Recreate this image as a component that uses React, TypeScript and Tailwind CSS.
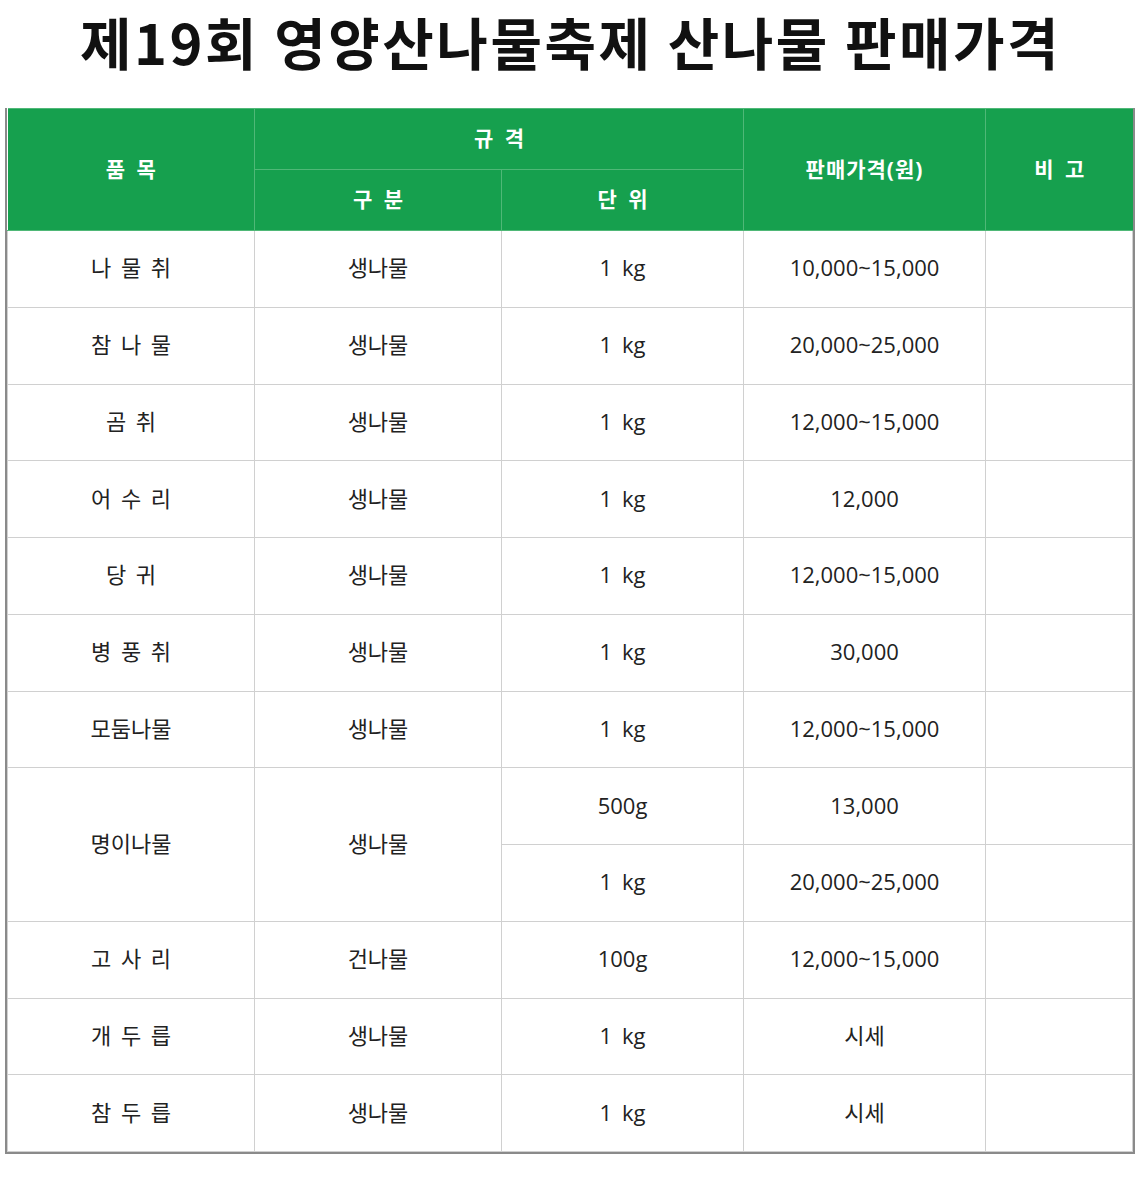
const rows: { name: string; kind: string; unit: string; price: string }[] = [
  { name: '나 물 취', kind: '생나물', unit: '1 kg', price: '10,000~15,000' },
  { name: '참 나 물', kind: '생나물', unit: '1 kg', price: '20,000~25,000' },
  { name: '곰 취', kind: '생나물', unit: '1 kg', price: '12,000~15,000' },
  { name: '어 수 리', kind: '생나물', unit: '1 kg', price: '12,000' },
  { name: '당 귀', kind: '생나물', unit: '1 kg', price: '12,000~15,000' },
  { name: '병 풍 취', kind: '생나물', unit: '1 kg', price: '30,000' },
  { name: '모둠나물', kind: '생나물', unit: '1 kg', price: '12,000~15,000' },
];

const tail: { name: string; kind: string; unit: string; price: string }[] = [
  { name: '고 사 리', kind: '건나물', unit: '100g', price: '12,000~15,000' },
  { name: '개 두 릅', kind: '생나물', unit: '1 kg', price: '시세' },
  { name: '참 두 릅', kind: '생나물', unit: '1 kg', price: '시세' },
];

const td = 'border border-[#d0d0d0] text-center align-middle h-[76.75px] pb-[2px] [word-spacing:4px]';
const th = 'border border-[#4fb877] text-center align-middle font-bold text-white text-[21px] h-[61px] [word-spacing:6px]';

function Row({ r }: { r: { name: string; kind: string; unit: string; price: string } }) {
  return (
    <tr>
      <td className={td}>{r.name}</td>
      <td className={td}>{r.kind}</td>
      <td className={td}>{r.unit}</td>
      <td className={td}>{r.price}</td>
      <td className={td}></td>
    </tr>
  );
}

export default function App() {
  return (
    <div
      className="w-[1141px] h-[1179px] bg-white"
      style={{ fontFamily: '"Open Sans", "Noto Sans CJK KR", sans-serif' }}
    >
      <h1
        className="text-center text-[56px] leading-[82px] font-bold text-[#111] tracking-[2.5px]"
        style={{ fontFamily: '"Noto Sans CJK KR", sans-serif' }}
      >
        제19회 영양산나물축제 산나물 판매가격
      </h1>
      <div className="ml-[5px] mt-[26px] w-[1130px] border-2 border-t-0 border-[#8a8a8a]">
        <table className="w-full border-collapse table-fixed text-[22px] text-[#222]">
          <colgroup>
            <col className="w-[247px]" />
            <col className="w-[247px]" />
            <col className="w-[242px]" />
            <col className="w-[242px]" />
            <col />
          </colgroup>
          <thead className="bg-[#16a04e]">
            <tr>
              <th rowSpan={2} className={th + ' border-l-0'}>품 목</th>
              <th colSpan={2} className={th}>규 격</th>
              <th rowSpan={2} className={th + ' [word-spacing:0px] tracking-[1px]'}>판매가격(원)</th>
              <th rowSpan={2} className={th + ' border-r-0'}>비 고</th>
            </tr>
            <tr>
              <th className={th}>구 분</th>
              <th className={th}>단 위</th>
            </tr>
          </thead>
          <tbody>
            {rows.map((r) => (
              <Row key={r.name} r={r} />
            ))}
            <tr>
              <td rowSpan={2} className={td}>명이나물</td>
              <td rowSpan={2} className={td}>생나물</td>
              <td className={td}>500g</td>
              <td className={td}>13,000</td>
              <td className={td}></td>
            </tr>
            <tr>
              <td className={td}>1 kg</td>
              <td className={td}>20,000~25,000</td>
              <td className={td}></td>
            </tr>
            {tail.map((r) => (
              <Row key={r.name} r={r} />
            ))}
          </tbody>
        </table>
      </div>
    </div>
  );
}
